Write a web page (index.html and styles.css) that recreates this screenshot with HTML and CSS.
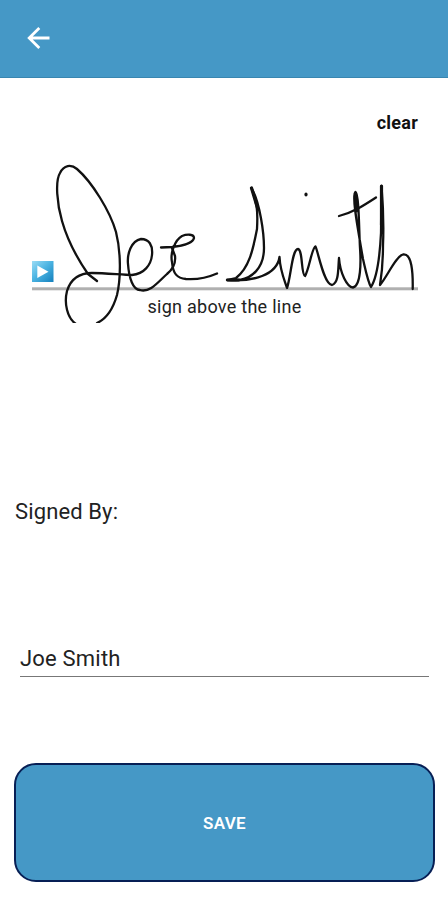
FILE: index.html
```html
<!DOCTYPE html>
<html lang="en">
<head>
  <meta charset="UTF-8">
  <meta name="viewport" content="width=device-width, initial-scale=1.0">
  <title>Signature</title>
  <link rel="stylesheet" href="styles.css">
</head>
<body>
  <header class="app-bar">
    <button class="back-btn" aria-label="Back">
      <svg width="24" height="24" viewBox="0 0 24 24" fill="none" stroke="#fff" stroke-width="2.8">
        <path d="M23.5 12H4M13.3 1.9L3.2 12L13.3 22.1"/>
      </svg>
    </button>
  </header>

  <main class="content">
    <button class="clear-btn">clear</button>

    <div class="signature-pad">
      <svg class="signature" width="448" height="173" viewBox="0 150 448 173">
        <defs>
          <linearGradient id="marker" x1="0" y1="0" x2="1" y2="1">
            <stop offset="0" stop-color="#9bdcf5"/>
            <stop offset="0.45" stop-color="#4db5e3"/>
            <stop offset="1" stop-color="#1480bd"/>
          </linearGradient>
        </defs>
        <rect x="32" y="287.3" width="386" height="3" fill="#b0b0b0"/>
        <rect x="32" y="261" width="21.5" height="21" fill="url(#marker)"/>
        <path d="M37.3 265.5L48.5 271.7L37.3 278Z" fill="#fff"/>
        <g class="ink">
          <!-- Joe -->
          <path d="M97 281L88 274C79 261 68 242 62 221C57 204 55 181 60 173C64 165 71 164 77 169C92 182 110 211 116 232C121 252 121 278 117 295C113 309 106 319 97 323"/>
          <path d="M76 324C67 318 64 303 67 291C71 278 81 273 92 273C106 273 123 275 132 275C144 274 151 265 152 255C153 245 149 239 141 239C131 241 127 254 128 264C129 278 133 290 140 290C150 293 158 282 167 274C173 269 176 264 175 256L172 248"/>
          <path d="M161 247.5L172 247C182 246 193 243 194 238C194 234 187 234 182 236C175 240 170 253 172 262C173 274 177 278 186 279C200 280 209 277 217 273.5"/>
          <!-- Smith -->
          <path d="M227 280L236 278C249 268 253 250 257 229C258 211 257 202 251.5 188C260 203 264 233 264 248C264 269 251 278 240 280H227C253 282 277 275 279.5 257C280 270 284 279 287 288C291 277 292 249 298 249C303 250 301 275 305 276C309 270 312 247 315.5 246.5C318 251 324 285 332 285C339 283 338 269 339 258C340 273 347 287 353 287.5C361 286 361 262 360 248C359 230 359 194 355.5 192C351 194 359 235 363 259C366 272 368 282 371 287C378 276 380 253 381 233L381.5 186C383 204 384 221 383 245C383 260 382 273 380 285C387 277 396 256 403 254.5C412 253 413 273 412.7 289"/>
          <path d="M251.5 188L257.5 208M355.5 193L356.5 211M381.5 186V225" stroke-width="3.2"/>
          <path d="M339 216C352 213 363 206 376 197.5"/>
          <path d="M306 194.2V194.8" stroke-width="3.2"/>
          <path d="M227.5 280H239" stroke-width="2.8"/>
        </g>
      </svg>
    </div>
    <p class="hint">sign above the line</p>

    <label class="signed-label" for="signed-by">Signed By:</label>
    <input class="signed-input" id="signed-by" type="text" value="Joe Smith">

    <button class="save-btn">SAVE</button>
  </main>
</body>
</html>
```

FILE: styles.css
```css
body {
  margin: 0;
  height: 900px;
  overflow: hidden;
  background-color: #fff;
  color: #222;
  font-family: Roboto, "Liberation Sans", sans-serif;
}
button {
  border: none;
  background: none;
  padding: 0;
  font-family: inherit;
  cursor: pointer;
}
.app-bar {
  display: flex;
  align-items: center;
  box-sizing: border-box;
  height: 78px;
  padding: 0 26px 1px;
  background-color: #4598c6;
  border-bottom: 1px solid #3986b0;
}
.back-btn,
.back-btn svg {
  display: block;
}
.content {
  display: flex;
  flex-direction: column;
}
.clear-btn {
  align-self: flex-end;
  margin: 34px 30px 0 0;
  height: 22px;
  font-size: 18px;
  line-height: 22px;
  font-weight: 700;
  letter-spacing: 0.25px;
  color: #111;
}
.signature-pad {
  margin-top: 16px;
  height: 173px;
}
.signature {
  display: block;
}
.ink {
  fill: none;
  stroke: #111;
  stroke-width: 2.3;
  stroke-linecap: round;
  stroke-linejoin: round;
}
.hint {
  margin: -28px 0 0 1px;
  height: 24px;
  font-size: 18px;
  line-height: 24px;
  letter-spacing: 0.27px;
  text-align: center;
}
.signed-label {
  margin: 179px 15px 0;
  font-size: 22px;
  line-height: 28px;
  letter-spacing: 0.12px;
}
.signed-input {
  margin: 115px 19px 0 20px;
  padding: 0;
  height: 35px;
  border: none;
  border-bottom: 1px solid #777;
  outline: none;
  font-family: inherit;
  font-size: 22px;
  letter-spacing: 0.2px;
  color: #222;
}
.save-btn {
  box-sizing: border-box;
  margin: 86px 13px 0 14px;
  height: 119px;
  border: 2px solid #071f55;
  border-radius: 22px;
  background-color: #4598c6;
  color: #fff;
  font-size: 17px;
  font-weight: 600;
  letter-spacing: 0.3px;
}
```
